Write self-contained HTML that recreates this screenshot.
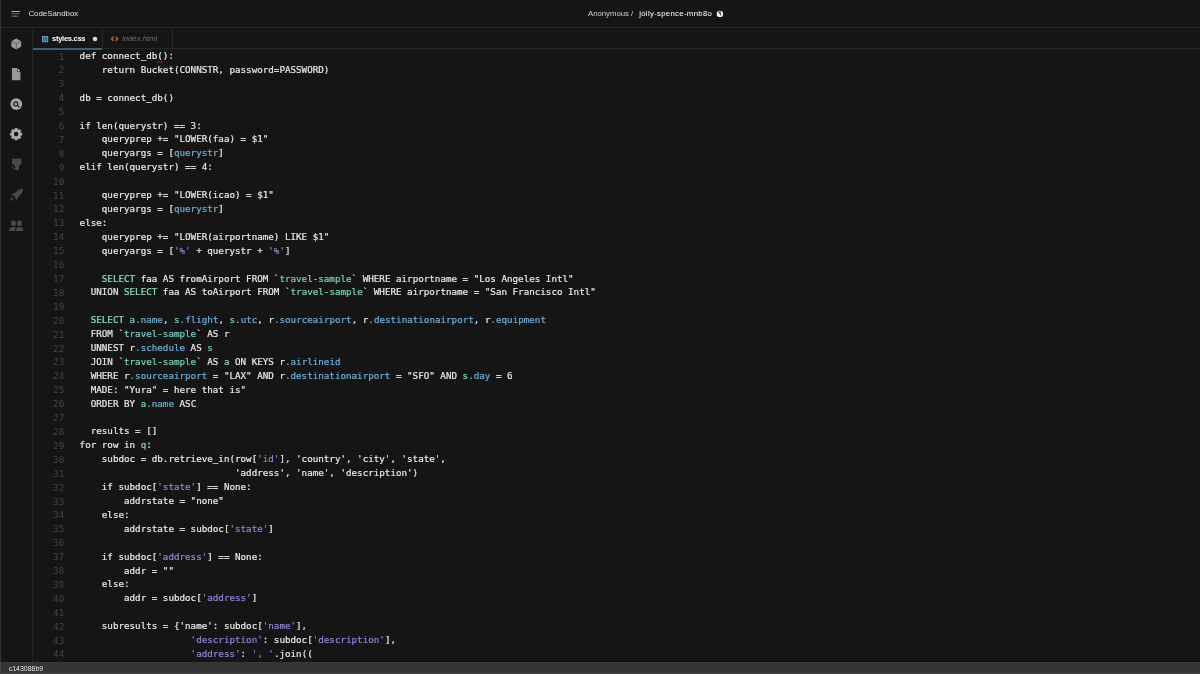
<!DOCTYPE html>
<html lang="en">
<head>
<meta charset="utf-8">
<title>CodeSandbox</title>
<style>
*{box-sizing:border-box;margin:0;padding:0}
html,body{width:1200px;height:674px;overflow:hidden;background:#151515}
body{position:relative;font-family:"Liberation Sans",sans-serif;color:#fff}
.edge{position:absolute;left:0;top:0;width:1px;height:662px;background:#333}
.header{position:absolute;left:0;top:0;width:1200px;height:28px;border-bottom:1px solid #242424}
.ui{will-change:transform}
.brand{position:absolute;left:28.4px;top:8px;font-size:7.87px;line-height:11px;color:#e0e0e0;white-space:nowrap}
.burger{position:absolute;left:4px;top:2px}
.title{position:absolute;left:588px;top:8px;font-size:7.75px;line-height:11px;white-space:nowrap;color:#d0d0d0}
.title b{font-weight:normal;color:#fff;margin-left:3.8px;letter-spacing:.32px}
.globe{position:absolute;left:708px;top:2px}
.sidebar{position:absolute;left:0;top:29px;width:33px;height:633px;border-right:1px solid #232323}
.ic{position:absolute;left:4px;width:24px;height:24px}
.tabs{position:absolute;left:33px;top:28px;width:1167px;height:21px;border-bottom:1px solid #252525}
.tab{position:absolute;top:1px;height:20px;border-right:1px solid #262626;font-size:7.75px;line-height:11px}
.tab span{position:absolute;top:4.3px;white-space:nowrap}
.tab svg{position:absolute}
.t1{left:0;width:70px}
.t1 i{position:absolute;left:0;right:0;top:19px;height:2px;background:#3a6078}
.t2{left:70px;width:70px}
.code{position:absolute;left:33px;top:49px;width:1167px;height:613px;overflow:hidden;font-family:"DejaVu Sans Mono","Liberation Mono",monospace;font-size:9.23px;line-height:13.91px;color:#e8e8e8;will-change:transform;-webkit-text-stroke:.2px}
.ln{height:13.91px;padding-left:46.6px;position:relative;white-space:pre}
.n{position:absolute;left:0;top:.5px;width:31.2px;text-align:right;color:#444;-webkit-text-stroke:0;transform:scaleY(.88);transform-origin:0 10px}
.b{color:#6fafd8}.g{color:#8ae0c8}.t{color:#78d2be}.p{color:#9783da}
.sq{position:absolute;left:124px;top:11.5px;width:6px;height:2.4px}
.status{position:absolute;left:0;top:662px;width:1200px;height:12px;background:#343434;border-top:1px solid #383838;border-bottom:1px solid #464646;font-size:6.95px;line-height:11px;color:#e4e4e4;padding-left:8.8px;overflow:hidden;white-space:nowrap}
.status:before{content:"";position:absolute;left:0;top:-1px;width:1px;height:12px;background:#4a4a4a}
</style>
</head>
<body>
<div class="header ui">
<svg class="burger" width="24" height="24" viewBox="0 0 24 24"><rect x="7.5" y="9" width="8.4" height=".9" fill="#c4c4c4"/><rect x="7.5" y="11.2" width="8.2" height=".9" fill="#6c6c6c"/><rect x="7.5" y="12.1" width="7" height="1.6" fill="#242424"/><rect x="7.5" y="13.7" width="6.4" height=".9" fill="#858585"/></svg>
<div class="brand">CodeSandbox</div>
<div class="title">Anonymous / <b>jolly-spence-mnb8o</b></div>
<svg class="globe" width="24" height="24" viewBox="0 0 24 24"><circle cx="11.9" cy="11.9" r="3.2" fill="#f2f2f2"/><path d="M10 9.7 L12.9 9.6 L12.6 11.3 L13.4 13.5 L12.4 13.2 L11.5 11.5 Z" fill="#222"/></svg>
</div>
<div class="sidebar ui">
<svg class="ic" style="top:3px" viewBox="0 0 24 24"><path d="M12.3 7 L16.7 9.5 V14.5 L12.3 16.9 L7.9 14.5 V9.5 Z" fill="#9c9c9c" stroke="#9c9c9c" stroke-width="1" stroke-linejoin="round"/><path d="M7.9 9.4 L12.3 11.7 L16.7 9.4 M12.3 11.7 V17" fill="none" stroke="#3c3c3c" stroke-width=".6"/></svg>
<svg class="ic" style="top:33px" viewBox="0 0 24 24"><path d="M7.9 5.9 H13.3 V9.7 H16.45 V18.2 H7.9 Z" fill="#999"/><path d="M13.75 6.2 L16.45 9.2 H13.75 Z" fill="#b8b8b8"/></svg>
<svg class="ic" style="top:63px" viewBox="0 0 24 24"><circle cx="12.3" cy="12.1" r="5.9" fill="#a6a6a6"/><circle cx="11.75" cy="11.9" r="1.95" fill="#b4b4b4" stroke="#242424" stroke-width="1.35"/><path d="M13.3 13.4 L15.2 15" stroke="#242424" stroke-width="1.2" stroke-linecap="round"/></svg>
<svg class="ic" style="top:93px" viewBox="0 0 24 24"><g transform="translate(12.1 12.1)"><path d="M-1.32 -4.30 L-1.14 -5.84 L1.14 -5.84 L1.32 -4.30 L2.11 -3.97 L3.33 -4.93 L4.93 -3.33 L3.97 -2.11 L4.30 -1.32 L5.84 -1.14 L5.84 1.14 L4.30 1.32 L3.97 2.11 L4.93 3.33 L3.33 4.93 L2.11 3.97 L1.32 4.30 L1.14 5.84 L-1.14 5.84 L-1.32 4.30 L-2.11 3.97 L-3.33 4.93 L-4.93 3.33 L-3.97 2.11 L-4.30 1.32 L-5.84 1.14 L-5.84 -1.14 L-4.30 -1.32 L-3.97 -2.11 L-4.93 -3.33 L-3.33 -4.93 L-2.11 -3.97Z" fill="#b0b0b0" stroke="#b0b0b0" stroke-width=".5" stroke-linejoin="round"/><circle r="2.3" fill="#151515"/></g></svg>
<svg class="ic" style="top:123px" viewBox="0 0 24 24"><g fill="#4a4a4a"><ellipse cx="12.8" cy="10.4" rx="4.85" ry="3.8"/><path d="M8.2 10 L8.4 6.1 L11 7.4 Z M17.4 10 L17.2 6.1 L14.6 7.4 Z"/><path d="M11.2 13 H15 V17.6 Q15 18.2 14.4 18.2 H11.8 Q11.2 18.2 11.2 17.6 Z"/></g><path d="M7.2 13.9 C8.7 14.2 8.6 16.9 11.3 16.8" fill="none" stroke="#4a4a4a" stroke-width="1"/></svg>
<svg class="ic" style="top:153px" viewBox="0 0 24 24"><g fill="#4a4a4a"><path d="M18.7 7 C17 6.3 14.6 7.6 13 9.2 L11.6 10.4 L7 12.4 L10.2 14.3 L11 15.4 L12.5 17.9 L14.6 14.8 L15.4 13.6 C17.6 11.9 19.4 9.4 18.7 7 Z"/><circle cx="7.9" cy="16.9" r="1.15"/><path d="M7 16.2 L5.8 18.9 L8.7 17.8 Z"/></g></svg>
<svg class="ic" style="top:183px" viewBox="0 0 24 24"><g fill="#484848"><ellipse cx="9.4" cy="11.2" rx="2.5" ry="2.75"/><rect x="13" y="8.5" width="5" height="5.4" rx="2.2"/><path d="M5 18.9 C5 16 7 15 9.4 15 C10.5 15 11.4 15.2 12 15.7 C11.3 16.5 11 17.6 11 18.9 Z"/><path d="M11.9 18.9 C11.9 16 13.5 15 15.6 15 C17.8 15 19.4 16 19.4 18.9 Z"/></g></svg>

</div>
<div class="tabs ui">
<div class="tab t1">
<svg style="left:8.9px;top:7px" width="7" height="7" viewBox="0 0 7 7"><rect x=".45" y=".45" width="5.3" height="5.3" fill="#3b7190" stroke="#5aa8d0" stroke-width=".9"/></svg>
<span style="left:19.1px;top:3.7px;color:#fff;font-weight:bold;font-size:7.5px;letter-spacing:-.27px">styles.css</span>
<svg style="left:58px;top:7px" width="8" height="8" viewBox="0 0 8 8"><circle cx="4" cy="3.0" r="2.35" fill="#d4d4d4"/></svg>
<i></i>
</div>
<div class="tab t2">
<svg style="left:7px;top:6px" width="10" height="8" viewBox="0 0 10 8"><path d="M3.5 1.7 L1.6 3.8 L3.5 5.9 M5.7 1.7 L7.6 3.8 L5.7 5.9" fill="none" stroke="#c06c38" stroke-width="1.35"/></svg>
<span style="left:19px;font-style:italic;color:#707070">index.html</span>
</div>
</div>
<div class="code">
<div class="ln"><span class="n">1</span>def connect_db():</div>
<div class="ln"><span class="n">2</span>    return Bucket(CONNSTR, password=PASSWORD)</div>
<div class="ln"><span class="n">3</span></div>
<div class="ln"><span class="n">4</span>db = connect_db()</div>
<div class="ln"><span class="n">5</span></div>
<div class="ln"><span class="n">6</span>if len(querystr) == 3:</div>
<div class="ln"><span class="n">7</span>    queryprep += "LOWER(faa) = $1"</div>
<div class="ln"><span class="n">8</span>    queryargs = [<span class="b">querystr</span>]</div>
<div class="ln"><span class="n">9</span>elif len(querystr) == 4:</div>
<div class="ln"><span class="n">10</span></div>
<div class="ln"><span class="n">11</span>    queryprep += "LOWER(icao) = $1"</div>
<div class="ln"><span class="n">12</span>    queryargs = [<span class="b">querystr</span>]</div>
<div class="ln"><span class="n">13</span>else:</div>
<div class="ln"><span class="n">14</span>    queryprep += "LOWER(airportname) LIKE $1"</div>
<div class="ln"><span class="n">15</span>    queryargs = [<span class="p">'%'</span> + querystr + <span class="p">'%'</span>]</div>
<div class="ln"><span class="n">16</span></div>
<div class="ln"><span class="n">17</span>    <span class="g">SELECT</span> faa AS fromAirport FROM `<span class="t">travel-sample</span>` WHERE airportname = "Los Angeles Intl"</div>
<div class="ln"><span class="n">18</span>  UNION <span class="g">SELECT</span> faa AS toAirport FROM `<span class="t">travel-sample</span>` WHERE airportname = "San Francisco Intl"</div>
<div class="ln"><span class="n">19</span></div>
<div class="ln"><span class="n">20</span>  <span class="g">SELECT</span> <span class="t">a</span><span class="b">.name</span>, <span class="t">s</span><span class="b">.flight</span>, <span class="t">s</span><span class="b">.utc</span>, r<span class="b">.sourceairport</span>, r<span class="b">.destinationairport</span>, r<span class="b">.equipment</span></div>
<div class="ln"><span class="n">21</span>  FROM `<span class="t">travel-sample</span>` AS r</div>
<div class="ln"><span class="n">22</span>  UNNEST r<span class="b">.schedule</span> AS <span class="t">s</span></div>
<div class="ln"><span class="n">23</span>  JOIN `<span class="t">travel-sample</span>` AS <span class="t">a</span> ON KEYS r<span class="b">.airlineid</span></div>
<div class="ln"><span class="n">24</span>  WHERE r<span class="b">.sourceairport</span> = "LAX" AND r<span class="b">.destinationairport</span> = "SFO" AND <span class="t">s</span><span class="b">.day</span> = 6</div>
<div class="ln"><span class="n">25</span>  MADE: "Yura" = here that is"</div>
<div class="ln"><span class="n">26</span>  ORDER BY <span class="t">a</span><span class="b">.name</span> ASC</div>
<div class="ln"><span class="n">27</span></div>
<div class="ln"><span class="n">28</span>  results = []</div>
<div class="ln"><span class="n">29</span>for row in <span class="t">q</span>:</div>
<div class="ln"><span class="n">30</span>    subdoc = db.retrieve_in(row[<span class="p">'id'</span>], 'country', 'city', 'state',</div>
<div class="ln"><span class="n">31</span>                            'address', 'name', 'description')</div>
<div class="ln"><span class="n">32</span>    if subdoc[<span class="p">'state'</span>] == None:</div>
<div class="ln"><span class="n">33</span>        addrstate = "none"</div>
<div class="ln"><span class="n">34</span>    else:</div>
<div class="ln"><span class="n">35</span>        addrstate = subdoc[<span class="p">'state'</span>]</div>
<div class="ln"><span class="n">36</span></div>
<div class="ln"><span class="n">37</span>    if subdoc[<span class="p">'address'</span>] == None:</div>
<div class="ln"><span class="n">38</span>        addr = ""</div>
<div class="ln"><span class="n">39</span>    else:</div>
<div class="ln"><span class="n">40</span>        addr = subdoc[<span class="p">'address'</span>]</div>
<div class="ln"><span class="n">41</span></div>
<div class="ln"><span class="n">42</span>    subresults = {'name': subdoc[<span class="p">'name'</span>],</div>
<div class="ln"><span class="n">43</span>                    <span class="p">'description'</span>: subdoc[<span class="p">'description'</span>],</div>
<div class="ln"><span class="n">44</span>                    <span class="p">'address'</span>: <span class="p">', '</span>.join((</div>
<svg class="sq" viewBox="0 0 6 2.4"><path d="M.2 1.7 Q1 1.6 1.6 1.1 T2.8 .7 T4 1.4 T5.8 .9" fill="none" stroke="#cc3328" stroke-width=".9"/></svg>
</div>
<div class="status ui">c143088b9</div>
<div class="edge"></div>
</body>
</html>
